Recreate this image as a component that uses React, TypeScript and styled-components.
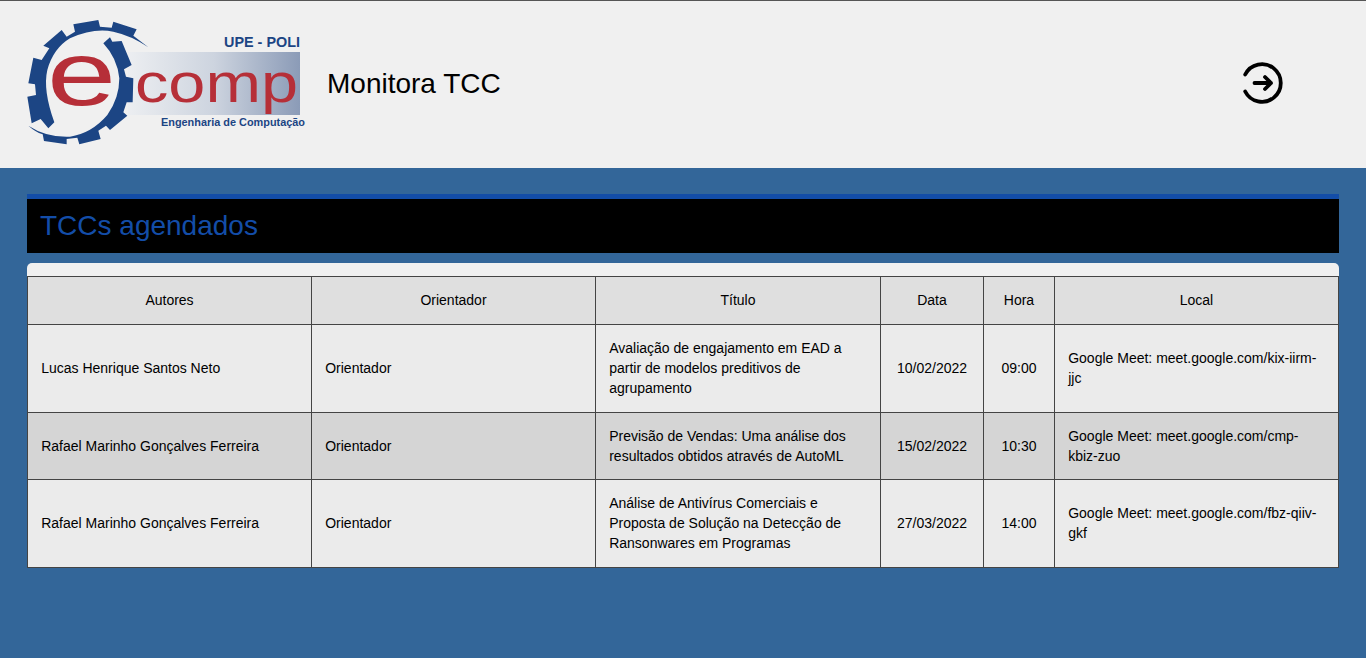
import React from 'react';
import styled, { createGlobalStyle } from 'styled-components';

interface Defesa {
  autor: string;
  orientador: string;
  titulo: string;
  data: string;
  hora: string;
  local: string;
}

const defesas: Defesa[] = [
  {
    autor: 'Lucas Henrique Santos Neto',
    orientador: 'Orientador',
    titulo: 'Avaliação de engajamento em EAD a partir de modelos preditivos de agrupamento',
    data: '10/02/2022',
    hora: '09:00',
    local: 'Google Meet: meet.google.com/kix-iirm-jjc',
  },
  {
    autor: 'Rafael Marinho Gonçalves Ferreira',
    orientador: 'Orientador',
    titulo: 'Previsão de Vendas: Uma análise dos resultados obtidos através de AutoML',
    data: '15/02/2022',
    hora: '10:30',
    local: 'Google Meet: meet.google.com/cmp-kbiz-zuo',
  },
  {
    autor: 'Rafael Marinho Gonçalves Ferreira',
    orientador: 'Orientador',
    titulo: 'Análise de Antivírus Comerciais e Proposta de Solução na Detecção de Ransonwares em Programas',
    data: '27/03/2022',
    hora: '14:00',
    local: 'Google Meet: meet.google.com/fbz-qiiv-gkf',
  },
];

const colunas = [
  { label: 'Autores', width: 284 },
  { label: 'Orientador', width: 284 },
  { label: 'Título', width: 285 },
  { label: 'Data', width: 103 },
  { label: 'Hora', width: 71 },
  { label: 'Local', width: 284 },
];

// gear halves, traced at 3x from the logo's top-left corner
const engrenagemA =
  'M103 322 L85 340 L62 312 L35 325 L22 245 L48 240 L45 208 L25 205 L40 128 L65 135 L88 100 L70 92 L125 45 L140 65 L165 50 L160 28 L235 15 L240 35 L275 38 L280 20 L350 43 L340 62 L385 97 Q335 62 280 50 Q220 38 150 70 Q100 100 82 165 Q68 225 103 322 Z';
const engrenagemB =
  'M250 85 L270 67 L277 80 L305 78 L335 150 L312 163 L318 185 L340 190 L338 262 L320 262 L310 292 L322 302 L270 345 L258 332 L235 347 L242 372 L178 388 L172 368 L140 372 L140 388 L72 378 L68 358 Q45 350 25 332 Q80 368 150 365 Q215 355 262 300 Q298 250 298 190 Q292 130 250 85 Z';

const Logo = () => (
  <LogoSvg viewBox="20 15 290 135" width="290" height="135">
    <defs>
      <linearGradient id="faixa" x1="0" x2="1" y1="0" y2="0">
        <stop offset="0" stopColor="#eceef1" />
        <stop offset="0.5" stopColor="#cdd4df" />
        <stop offset="1" stopColor="#8b9bb7" />
      </linearGradient>
    </defs>
    <rect x="128" y="52" width="172" height="63" fill="url(#faixa)" />
    <g transform="translate(20 15) scale(0.3333)">
      <path d={engrenagemA} fill="#1c4584" />
      <path d={engrenagemB} fill="#1c4584" />
    </g>
    <LogoE transform="translate(47 105) scale(1.38 1)">e</LogoE>
    <LogoComp transform="translate(135 102) scale(1.19 1)">comp</LogoComp>
    <LogoUpe x="300" y="47" textAnchor="end">UPE - POLI</LogoUpe>
    <LogoEng x="305" y="126" textAnchor="end">Engenharia de Computação</LogoEng>
  </LogoSvg>
);

const SairIcon = () => (
  <SairSvg viewBox="0 0 44 44" width="44" height="44">
    <path d="M4.2 13.5A18.8 18.8 0 1 1 4.2 30.5" />
    <path d="M13.5 22H30M24 16l6 6-6 6" />
  </SairSvg>
);

const App: React.FC = () => (
  <>
    <GlobalStyle />
    <Page>
      <Header>
        <Logo />
        <Titulo>Monitora TCC</Titulo>
        <Sair aria-label="Sair">
          <SairIcon />
        </Sair>
      </Header>
      <Main>
        <Faixa>
          <FaixaTitulo>TCCs agendados</FaixaTitulo>
        </Faixa>
        <Card>
          <Tabela>
            <colgroup>
              {colunas.map((c) => (
                <col key={c.label} style={{ width: c.width }} />
              ))}
            </colgroup>
            <thead>
              <tr>
                {colunas.map((c) => (
                  <Th key={c.label}>{c.label}</Th>
                ))}
              </tr>
            </thead>
            <tbody>
              {defesas.map((d, i) => (
                <Linha key={i} $par={i % 2 === 1}>
                  <Td>{d.autor}</Td>
                  <Td>{d.orientador}</Td>
                  <Td>{d.titulo}</Td>
                  <TdCentro>{d.data}</TdCentro>
                  <TdCentro>{d.hora}</TdCentro>
                  <Td>{d.local}</Td>
                </Linha>
              ))}
            </tbody>
          </Tabela>
        </Card>
      </Main>
    </Page>
  </>
);

const GlobalStyle = createGlobalStyle`
  html, body {
    margin: 0;
    padding: 0;
    height: 100%;
  }
  body {
    font-family: "Liberation Sans", Arial, sans-serif;
    background: #336699;
  }
`;

const Page = styled.div`
  min-height: 658px;
  display: flex;
  flex-direction: column;
`;

const Header = styled.header`
  height: 168px;
  box-sizing: border-box;
  border-top: 1px solid #555;
  background: #f0f0f0;
  display: flex;
  align-items: center;
  padding: 0 81px 0 20px;
`;

const LogoSvg = styled.svg`
  display: block;
  flex-shrink: 0;
  margin-bottom: 4px;
  overflow: visible;
`;

const LogoE = styled.text`
  font-family: "Liberation Sans", sans-serif;
  font-size: 90px;
  fill: #b62f38;
`;

const LogoComp = styled.text`
  font-family: "Liberation Sans", sans-serif;
  font-size: 56px;
  fill: #b62f38;
`;

const LogoUpe = styled.text`
  font-family: "Liberation Sans", sans-serif;
  font-size: 14.4px;
  font-weight: bold;
  fill: #1c4584;
`;

const LogoEng = styled.text`
  font-family: "Liberation Sans", sans-serif;
  font-size: 10.9px;
  font-weight: bold;
  fill: #1c4584;
`;

const Titulo = styled.h1`
  margin: 0 0 2px 17px;
  font-size: 28px;
  font-weight: normal;
  color: #000;
`;

const Sair = styled.button`
  margin-left: auto;
  margin-bottom: 3px;
  padding: 0;
  border: 0;
  background: none;
  cursor: pointer;
  display: flex;
`;

const SairSvg = styled.svg`
  display: block;
  fill: none;
  stroke: #000;
  stroke-width: 3.8;
  stroke-linecap: round;
  stroke-linejoin: round;
`;

const Main = styled.main`
  flex: 1;
  padding: 26px 27px 0;
`;

const Faixa = styled.div`
  height: 59px;
  box-sizing: border-box;
  border-top: 5px solid #134da8;
  background: #000;
  display: flex;
  align-items: center;
  padding-left: 13px;
`;

const FaixaTitulo = styled.h2`
  margin: 0;
  font-size: 28px;
  font-weight: normal;
  color: #134da8;
`;

const Card = styled.div`
  margin-top: 10px;
  padding-top: 13px;
  background: #f0f0f0;
  border-radius: 5px 5px 0 0;
`;

const Tabela = styled.table`
  width: 100%;
  table-layout: fixed;
  border-collapse: collapse;
  font-size: 14px;
  line-height: 20px;
  color: #000;
`;

const Th = styled.th`
  height: 45px;
  padding: 0 13px 2px;
  border: 1px solid #444;
  background: #dfdfdf;
  font-weight: normal;
  text-align: center;
`;

const Linha = styled.tr<{ $par: boolean }>`
  background: ${({ $par }) => ($par ? '#d5d5d5' : '#ebebeb')};
`;

const Td = styled.td`
  padding: 13.25px 13.2px;
  border: 1px solid #444;
  text-align: left;
`;

const TdCentro = styled(Td)`
  text-align: center;
`;

export default App;
